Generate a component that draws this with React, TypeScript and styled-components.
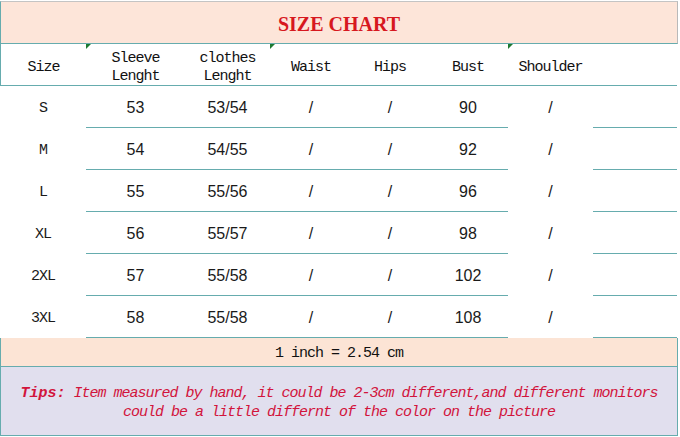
import styled, { createGlobalStyle } from "styled-components";

const GlobalStyle = createGlobalStyle`
    html, body {
        margin: 0;
        padding: 0;
        background: #ffffff;
    }
    body {
        font-family: "Liberation Mono", monospace;
        color: #111111;
    }
`

const teal = "#66acae";
const columns = "86px 99px 85px 82px 76px 80px 85px 84px";

interface RowData {
    size: string,
    sleeve: string,
    clothes: string,
    waist: string,
    hips: string,
    bust: string,
    shoulder: string,
}

const rows: RowData[] = [
    { size: "S", sleeve: "53", clothes: "53/54", waist: "/", hips: "/", bust: "90", shoulder: "/" },
    { size: "M", sleeve: "54", clothes: "54/55", waist: "/", hips: "/", bust: "92", shoulder: "/" },
    { size: "L", sleeve: "55", clothes: "55/56", waist: "/", hips: "/", bust: "96", shoulder: "/" },
    { size: "XL", sleeve: "56", clothes: "55/57", waist: "/", hips: "/", bust: "98", shoulder: "/" },
    { size: "2XL", sleeve: "57", clothes: "55/58", waist: "/", hips: "/", bust: "102", shoulder: "/" },
    { size: "3XL", sleeve: "58", clothes: "55/58", waist: "/", hips: "/", bust: "108", shoulder: "/" },
]

const App = () => {
    return (
        <>
            <GlobalStyle />
            <Sheet>
                <TitleBar>SIZE CHART</TitleBar>
                <HeaderRow>
                    <HeadCell>Size</HeadCell>
                    <HeadCell>
                        <Marker />
                        <span>Sleeve<br />Lenght</span>
                    </HeadCell>
                    <HeadCell>
                        <span>clothes<br />Lenght</span>
                    </HeadCell>
                    <HeadCell>
                        <Marker />
                        Waist
                    </HeadCell>
                    <HeadCell>Hips</HeadCell>
                    <HeadCell>Bust</HeadCell>
                    <HeadCell>
                        <Marker />
                        Shoulder
                    </HeadCell>
                    <HeadCell />
                </HeaderRow>
                {rows.map((r) => (
                    <DataRow key={r.size}>
                        <Cell mono>{r.size}</Cell>
                        <Cell lined>{r.sleeve}</Cell>
                        <Cell lined>{r.clothes}</Cell>
                        <Cell lined>{r.waist}</Cell>
                        <Cell lined>{r.hips}</Cell>
                        <Cell lined>{r.bust}</Cell>
                        <Cell>{r.shoulder}</Cell>
                        <Cell lined />
                    </DataRow>
                ))}
                <InchRow>1 inch = 2.54 cm</InchRow>
                <TipsBox>
                    <p>
                        <b>Tips:</b> Item measured by hand, it could be 2-3cm different,and different monitors<br />
                        could be a little differnt of the color on the picture
                    </p>
                </TipsBox>
            </Sheet>
        </>
    )
}

export default App;

const Sheet = styled.div`
    width: 678px;
    display: flex;
    flex-direction: column;
`
const TitleBar = styled.div`
    margin-top: 1px;
    height: 43px;
    box-sizing: border-box;
    padding-top: 4px;
    display: flex;
    align-items: center;
    justify-content: center;
    background: #fde5d9;
    border-top: 1px solid #c4c4c4;
    border-left: 1px solid ${teal};
    border-right: 1px solid #b9b9b9;
    border-bottom: 1px solid ${teal};
    font-family: "Liberation Serif", serif;
    font-weight: 700;
    font-size: 20px;
    color: #d7181f;
`
const HeaderRow = styled.div`
    width: 677px;
    height: 42px;
    box-sizing: border-box;
    display: grid;
    grid-template-columns: 85px 99px 85px 82px 76px 80px 85px 84px;
    border-left: 1px solid ${teal};
    border-bottom: 1px solid ${teal};
`
const HeadCell = styled.div`
    position: relative;
    display: flex;
    align-items: center;
    justify-content: center;
    text-align: center;
    font-family: "Liberation Mono", monospace;
    font-size: 15px;
    letter-spacing: -1px;
    line-height: 18px;
    padding-top: 6px;
`
const Marker = styled.i`
    position: absolute;
    top: 0;
    left: 0;
    width: 0;
    height: 0;
    border-top: 5px solid #1e7a32;
    border-right: 5px solid transparent;
`
const DataRow = styled.div`
    width: 677px;
    height: 42px;
    display: grid;
    grid-template-columns: ${columns};
`
const Cell = styled.div<{ lined?: boolean, mono?: boolean }>`
    box-sizing: border-box;
    height: 42px;
    padding-top: 3px;
    display: flex;
    align-items: center;
    justify-content: center;
    border-bottom: 1px solid ${(props) => props.lined ? teal : "transparent"};
    font-family: ${(props) => props.mono ? '"Liberation Mono", monospace' : '"Liberation Sans", Arial, sans-serif'};
    font-size: ${(props) => props.mono ? "15px" : "16px"};
    letter-spacing: ${(props) => props.mono ? "-1px" : "0"};
    color: #1a1a1a;
`
const InchRow = styled.div`
    height: 28px;
    box-sizing: border-box;
    display: flex;
    align-items: center;
    justify-content: center;
    background: #fce4d5;
    border-left: 1px solid ${teal};
    border-right: 1px solid ${teal};
    font-size: 15px;
    letter-spacing: -1px;
    padding-top: 2px;
`
const TipsBox = styled.div`
    height: 70px;
    box-sizing: border-box;
    display: flex;
    align-items: center;
    justify-content: center;
    background: #e1dfee;
    border: 1px solid ${teal};

    p {
        margin: 0;
        padding-top: 4px;
        text-align: center;
        font-style: italic;
        font-size: 15px;
        letter-spacing: -1px;
        line-height: 19px;
        color: #d2143c;
    }

    b {
        font-weight: 700;
        letter-spacing: 0;
    }
`
